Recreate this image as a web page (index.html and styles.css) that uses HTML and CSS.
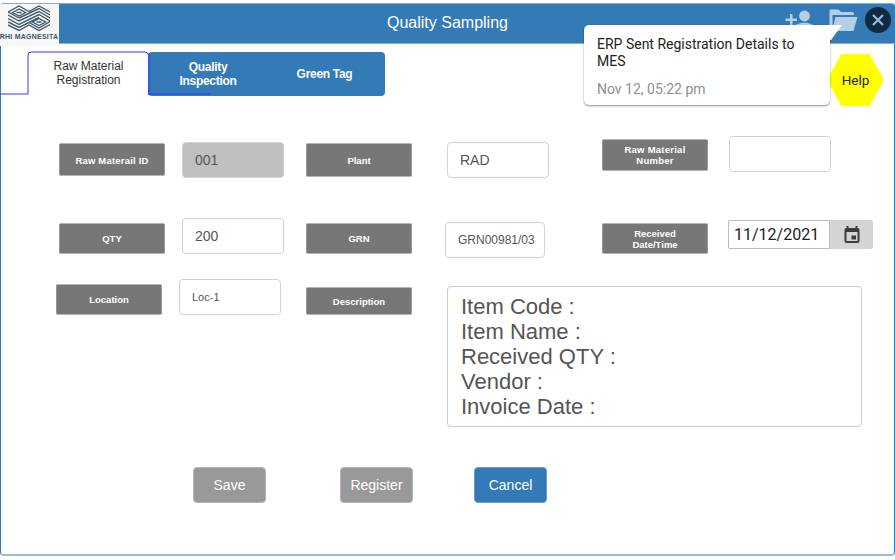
FILE: index.html
```html
<!DOCTYPE html>
<html lang="en">
<head>
<meta charset="utf-8">
<title>Quality Sampling</title>
<link rel="stylesheet" href="styles.css">
</head>
<body>
<div class="window">
  <header class="header">
    <div class="logo">
      <svg width="42" height="26" viewBox="0 0 42 26" fill="none" stroke="#40576b" stroke-width="1.400">
        <path d="M11 13L0 7L11 1L21 6.500L31 1L42 7"/>
        <path d="M4.500 7.500L11 4L17.500 7.500L11 11zM8.500 7.500H13.500"/>
        <path d="M11 13L31 3.500L42 10"/>
        <path d="M0 10L11 16L31 6.500L42 13"/>
        <path d="M0 13.500L11 19.500L31 9.500L42 16"/>
        <path d="M0 17L11 22.500L31 12.500"/>
        <path d="M0 20L11 25.500L21 20L31 25.500L42 19.500"/>
        <path d="M24.500 17L31 13.500L37.500 17L31 20.500zM28.500 17H33.500M21 17.500L31 23L42 16.500"/>
      </svg>
      <span class="logo-name">RHI MAGNESITA</span>
    </div>
    <h1 class="title">Quality Sampling</h1>
    <div class="tools">
      <svg class="add-user" width="32" height="24" viewBox="0 0 32 24">
        <path d="M5 5h2.500v4.500H12V12H7.500v4.500H5V12H0.500V9.500H5z"/>
        <circle cx="19.500" cy="7" r="5.400"/>
        <path d="M8.500 21v-2c0-3.500 7-5.200 11-5.200s10 1.700 10 5.200v2z"/>
      </svg>
      <svg class="folder" width="29" height="23" viewBox="0 0 29 23">
        <path d="M0.500 21V2Q0.500 0.500 2 0.500H9.500L12 3H23.500Q25 3 25 5V6H3.500V17.500z"/>
        <path d="M6.500 8H28.500L24.500 22H3z"/>
      </svg>
      <svg class="close" width="26" height="26" viewBox="0 0 26 26">
        <circle cx="13" cy="13" r="13" fill="#12293f"/>
        <path d="M8 8l10 10M18 8L8 18" stroke="#8fbce4" stroke-width="2.200"/>
      </svg>
    </div>
  </header>

  <nav class="tabs">
    <div class="tab active">Raw Material<br>Registration</div>
    <div class="tab-group">
      <div class="tab">Quality<br>Inspection</div>
      <div class="tab">Green Tag</div>
    </div>
    <svg class="tab-line" width="212" height="44" viewBox="0 0 212 44" fill="none" stroke="#3333ff">
      <path d="M0 42H28V3Q28 0 31 0H145Q148 0 148.500 3"/>
      <path d="M149 2V42H211" stroke="#3158df" stroke-width="2"/>
    </svg>
  </nav>

  <main class="form">
    <div class="row row-1">
      <div class="label id-label">Raw Materail ID</div>
      <div class="input id-input">001</div>
      <div class="label plant-label">Plant</div>
      <div class="input plant-input">RAD</div>
      <div class="label number-label">Raw Material<br>Number</div>
      <div class="input"></div>
    </div>
    <div class="row row-2">
      <div class="label second">QTY</div>
      <div class="input">200</div>
      <div class="label second">GRN</div>
      <div class="input grn-input">GRN00981/03</div>
      <div class="label second">Received<br>Date/Time</div>
      <div class="date">
        <span class="date-value">11/12/2021</span>
        <span class="date-button">
          <svg width="16" height="17" viewBox="0 0 16 17" fill="#3b3b3b">
            <path fill-rule="evenodd" d="M2.500 0H4.500V2H11.500V0H13.500V2Q15.500 2 15.500 4V15Q15.500 17 13.500 17H2.500Q.5 17 .5 15V4Q.5 2 2.500 2zM2.500 6V15H13.500V6zM7.500 9.500H12V13.500H7.500z"/>
          </svg>
        </span>
      </div>
    </div>
    <div class="row row-3">
      <div class="label location-label">Location</div>
      <div class="input location-input">Loc-1</div>
      <div class="label description-label">Description</div>
      <div class="textarea">Item Code :<br>Item Name :<br>Received QTY :<br>Vendor :<br>Invoice Date :</div>
    </div>
    <div class="actions">
      <div class="button">Save</div>
      <div class="button">Register</div>
      <div class="button primary">Cancel</div>
    </div>
  </main>

  <div class="help">Help</div>
  <div class="toast">
    <p class="toast-text">ERP Sent Registration Details to MES</p>
    <p class="toast-time">Nov 12, 05:22 pm</p>
    <svg class="toast-tip" width="13" height="16" viewBox="0 0 13 16"><path d="M0 0H12L1 15H0z" fill="#fff"/></svg>
  </div>
</div>
</body>
</html>
```
FILE: styles.css
```css
* { box-sizing: border-box; }
body {
  margin: 0;
  padding-top: 3px;
  background: #fff;
  font-family: "Liberation Sans", sans-serif;
}
.window {
  position: relative;
  width: 895px;
  height: 553px;
  border: 1px solid #337ab7;
  border-bottom: 2px solid #96bcdb;
  border-top: 0;
  border-radius: 4px;
}
.header {
  display: flex;
  width: 895px;
  height: 41px;
  margin-left: -1px;
  background: #337ab7;
  border-top: 1px solid #85b0d4;
  border-bottom: 1px solid #85b0d4;
  border-radius: 4px 4px 0 0;
}
.logo {
  width: 59px;
  height: 42px;
  background: #f7f7f7;
  text-align: center;
  white-space: nowrap;
}
.logo svg { display: block; margin: 1px 0 0 8px; }
.logo-name {
  display: block;
  margin: 1px 0 0 -1px;
  color: #40566a;
  font-size: 7px;
  font-weight: bold;
  line-height: 9px;
  letter-spacing: 0.25px;
}
.title {
  width: 121px;
  margin: 9px 277px 0 328px;
  color: #fff;
  font-size: 16px;
  font-weight: normal;
  line-height: 20px;
  white-space: nowrap;
}
.tools { display: flex; align-items: flex-start; fill: #b5cee4; }
.add-user { margin-top: 5px; }
.folder { margin: 5px 7px 0 12px; }
.close { margin-top: 3px; }

.tabs { position: relative; display: flex; height: 44px; margin: 8px 0 0 27px; }
.tab {
  display: flex;
  align-items: center;
  justify-content: center;
  text-align: center;
  font-size: 12px;
  line-height: 14px;
}
.tab.active { width: 120px; padding: 0 0 2px 1px; color: #333; }
.tab-group {
  display: flex;
  width: 237px;
  background: #337ab7;
  color: #fff;
  border-radius: 4px;
  font-weight: bold;
}
.tab-group .tab { width: 120px; letter-spacing: -0.3px; }
.tab-group .tab + .tab { width: 113px; }
.tab-line { position: absolute; left: -28px; top: 0; overflow: visible; }

.form { padding-top: 40px; }
.row {
  display: grid;
  grid-template-columns: 123px 124px 141px 155px 127px 145px;
  align-items: start;
  padding-left: 58px;
}
.row-1 { height: 82px; }
.row-2 { height: 62px; }
.row-3 { height: 187px; }
.label {
  display: flex;
  align-items: center;
  justify-content: center;
  width: 106px;
  height: 31px;
  background: #777;
  border: 1px solid #b4b4b4;
  border-left-color: #999;
  border-right-color: #999;
  border-radius: 2px;
  color: #fff;
  font-size: 9.500px;
  font-weight: bold;
  line-height: 11px;
  text-align: center;
}
.input {
  display: flex;
  align-items: center;
  width: 102px;
  height: 36px;
  padding: 0 0 1px 12px;
  background: #fff;
  border: 1px solid #d2d2d2;
  border-radius: 4px;
  color: #555;
  font-size: 14px;
}
.id-label { height: 33px; margin-top: 7px; padding-top: 1px; letter-spacing: 0.200px; }
.id-input { margin-top: 6px; background: #c0c0c0; }
.plant-label { height: 34px; margin-top: 7px; }
.plant-input { margin-top: 6px; }
.number-label { height: 32px; margin-top: 3px; letter-spacing: 0.250px; }
.second { margin-top: 5px; }
.grn-input { width: 100px; margin: 4px 0 0 -2px; font-size: 12px; }
.location-label { margin: 4px 0 0 -3px; }
.location-input { margin: -1px 0 0 -3px; font-size: 11px; }
.description-label { height: 28px; margin-top: 7px; }
.textarea {
  width: 415px;
  height: 141px;
  margin-top: 6px;
  padding: 7px 13px;
  border: 1px solid #ccc;
  border-radius: 4px;
  color: #555;
  font-size: 22px;
  line-height: 25px;
}
.date {
  display: flex;
  height: 29px;
  margin: 2px 0 0 -1px;
  color: #222;
  font-family: Roboto, sans-serif;
  font-size: 16px;
  line-height: 28px;
}
.date-value {
  width: 102px;
  padding-left: 5px;
  border: 1px solid #bbb;
  border-radius: 2px 0 0 2px;
  letter-spacing: 0;
}
.date-button {
  display: flex;
  align-items: center;
  justify-content: center;
  width: 43px;
  background: #d4d4d4;
  border-radius: 0 2px 2px 0;
}
.actions { display: flex; margin-left: 192px; }
.button {
  width: 73px;
  height: 36px;
  margin-right: 74px;
  background: #999;
  border: 1px solid #b5b5b5;
  border-radius: 4px;
  color: #fff;
  font-size: 14px;
  line-height: 34px;
  text-align: center;
}
.button + .button { margin-right: 61px; }
.button.primary { background: #337ab7; border-color: #6a9dca; }

.help {
  position: absolute;
  left: 826px;
  top: 51px;
  width: 57px;
  height: 52px;
  background: #ff0;
  clip-path: polygon(25% 0, 75% 0, 100% 50%, 75% 100%, 25% 100%, 0 50%);
  color: #222;
  font: 13.500px/53px Roboto, sans-serif;
  text-align: center;
}
.toast {
  position: absolute;
  left: 583px;
  top: 22px;
  width: 246px;
  height: 80px;
  padding: 11px 13px;
  background: #fff;
  border-radius: 5px 0 5px 5px;
  box-shadow: 0 1px 2px rgba(0, 0, 0, 0.45);
  font: 14px/17px Roboto, sans-serif;
}
.toast p { margin: 0; }
.toast-text { color: #222; }
.toast .toast-time { margin-top: 11px; color: #909090; }
.toast-tip { position: absolute; left: 246px; top: 0; }
```
